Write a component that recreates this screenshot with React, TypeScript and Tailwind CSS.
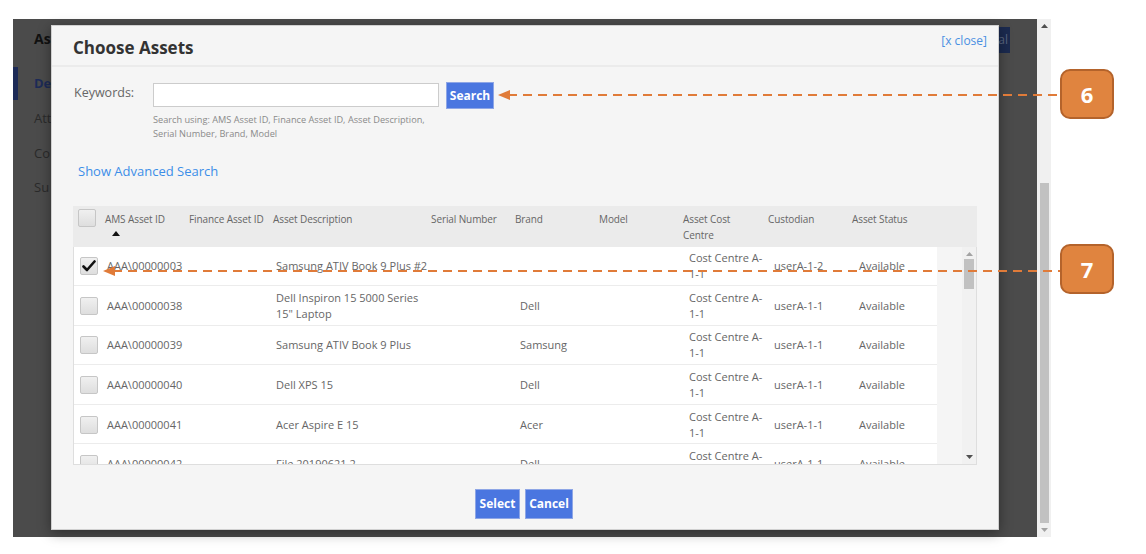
const rows = [
  { id: "AAA\\00000003", desc: ["Samsung ATIV Book 9 Plus #2"], brand: "", custodian: "userA-1-2", checked: true },
  { id: "AAA\\00000038", desc: ["Dell Inspiron 15 5000 Series", "15\" Laptop"], brand: "Dell", custodian: "userA-1-1" },
  { id: "AAA\\00000039", desc: ["Samsung ATIV Book 9 Plus"], brand: "Samsung", custodian: "userA-1-1" },
  { id: "AAA\\00000040", desc: ["Dell XPS 15"], brand: "Dell", custodian: "userA-1-1" },
  { id: "AAA\\00000041", desc: ["Acer Aspire E 15"], brand: "Acer", custodian: "userA-1-1" },
  { id: "AAA\\00000042", desc: ["File 20190621 2"], brand: "Dell", custodian: "userA-1-1" },
];

const headers = [
  ["AMS Asset ID"],
  ["Finance Asset ID"],
  ["Asset Description"],
  ["Serial Number"],
  ["Brand"],
  ["Model"],
  ["Asset Cost", "Centre"],
  ["Custodian"],
  ["Asset Status"],
];

function Checkbox({ checked }: { checked?: boolean }) {
  return (
    <div className="w-[18px] h-[18px] rounded-[2px] border border-[#c6c6c6] bg-gradient-to-b from-[#f0f0f0] to-[#dedede] flex items-center justify-center">
      {checked && (
        <svg width="14" height="12" viewBox="0 0 14 12">
          <path d="M1.5 6.5 L5 10 L12.5 1.5" fill="none" stroke="#111" strokeWidth="2.6" strokeLinecap="round" strokeLinejoin="round" />
        </svg>
      )}
    </div>
  );
}

function Callout({ n }: { n: string }) {
  return (
    <div className="w-[54px] h-[50px] rounded-[10px] bg-[#e0843f] border-2 border-[#b4632b] flex items-center justify-center text-white font-bold text-[22px]">
      {n}
    </div>
  );
}

export default function App() {
  return (
    <div className="relative w-[1146px] h-[554px] bg-white overflow-hidden font-['Open_Sans','Noto_Sans',sans-serif]">
      <div className="flex pt-[19px] pl-[13px]">
        {/* page behind the overlay */}
        <div className="relative w-[1024px] h-[518px] bg-[#4b4b4b]">
          <div className="pl-[21px] pt-[9px] text-[14px] font-bold text-[#111]">As</div>
          <div className="mt-[18px] flex h-[33px] items-center">
            <div className="w-[5px] h-full bg-[#1d2b57]"></div>
            <div className="pl-[16px] text-[13px] font-bold text-[#1d2b57]">De</div>
          </div>
          <div className="pl-[21px] mt-[9px] text-[13px] text-[#2a2a2a]">Att</div>
          <div className="pl-[21px] mt-[15px] text-[13px] text-[#2a2a2a]">Co</div>
          <div className="pl-[21px] mt-[15px] text-[13px] text-[#2a2a2a]">Su</div>
          <div className="absolute left-[970px] top-[8px] w-[27px] h-[26px] bg-[#1b2a4f] text-[12px] text-[#5a6680] flex items-center justify-end pr-[2px]">al</div>

          {/* modal */}
          <div className="absolute left-[38px] top-[6px] w-[948px] h-[505px] bg-[#f5f5f5] border border-[#d0d0d0] shadow-[0_3px_12px_rgba(0,0,0,0.4)] flex flex-col">
            <div className="h-[41px] flex justify-between border-b-2 border-[#ebebeb] pl-[21px] pr-[11px]">
              <div className="pt-[9px] text-[17px] font-bold text-[#333]">Choose Assets</div>
              <div className="pt-[6px] text-[12px] text-[#4a90e2]">[x close]</div>
            </div>

            <div className="flex pl-[22px] pt-[15px]">
              <div className="w-[79px] pt-[2px] text-[12.5px] text-[#666]">Keywords:</div>
              <div>
                <div className="flex items-start">
                  <div className="w-[286px] h-[24px] mt-[1px] bg-white border border-[#ccc]"></div>
                  <div className="ml-[7px] w-[48px] h-[27px] bg-[#4a76e0] border border-[#8ea6e6] text-white text-[12px] font-bold flex items-center justify-center">
                    Search
                  </div>
                </div>
                <div className="mt-[4px] text-[9.2px] leading-[14px] text-[#8a8a8a]">
                  <div>Search using: AMS Asset ID, Finance Asset ID, Asset Description,</div>
                  <div>Serial Number, Brand, Model</div>
                </div>
              </div>
            </div>

            <div className="pl-[26px] mt-[21px] text-[13px] text-[#3c8ee8]">Show Advanced Search</div>

            {/* table */}
            <div className="ml-[21px] mt-[24px] w-[904px]">
              <div className="grid grid-cols-[27px_84px_84px_158px_84px_84px_84px_85px_84px_1fr] h-[41px] bg-[#ebebeb] text-[10px] leading-[16px] text-[#666]">
                <div className="pl-[5px] pt-[3px]">
                  <Checkbox />
                </div>
                {headers.map((h, i) => (
                  <div key={i} className="pl-[5px] pt-[5px] tracking-[-0.1px]">
                    {h.map((l) => (
                      <div key={l}>{l}</div>
                    ))}
                    {i === 0 && (
                      <svg className="ml-[7px] mt-[4px]" width="8" height="5" viewBox="0 0 8 5">
                        <path d="M0 5 L4 0 L8 5 Z" fill="#111" />
                      </svg>
                    )}
                  </div>
                ))}
                <div></div>
              </div>
              <div className="flex h-[218px] border-l border-b border-r border-[#dedede] overflow-hidden">
                <div className="w-[863px] h-full overflow-hidden">
                  {rows.map((r) => (
                    <div
                      key={r.id}
                      className="grid grid-cols-[28px_84px_85px_160px_84px_84px_85px_85px_85px_83px] h-[39.6px] bg-white border-b border-[#ececec] text-[11px] leading-[16px] text-[#666] items-center pt-[1px]"
                    >
                      <div className="pl-[6px]">
                        <Checkbox checked={r.checked} />
                      </div>
                      <div className="pl-[5px]">{r.id}</div>
                      <div></div>
                      <div className="pl-[5px]">
                        {r.desc.map((d) => (
                          <div key={d}>{d}</div>
                        ))}
                      </div>
                      <div></div>
                      <div className="pl-[5px]">{r.brand}</div>
                      <div></div>
                      <div className="pl-[5px]">
                        <div>Cost Centre A-</div>
                        <div>1-1</div>
                      </div>
                      <div className="pl-[5px]">{r.custodian}</div>
                      <div className="pl-[5px]">Available</div>
                    </div>
                  ))}
                </div>
                <div className="flex-1"></div>
                <div className="w-[14px] h-full bg-[#f1f1f1] flex flex-col items-center">
                  <svg className="mt-[5px]" width="7" height="4" viewBox="0 0 7 4">
                    <path d="M0 4 L3.5 0 L7 4 Z" fill="#a3a3a3" />
                  </svg>
                  <div className="mt-[3px] w-[10px] h-[30px] bg-[#c1c1c1]"></div>
                  <div className="flex-1"></div>
                  <svg className="mb-[5px]" width="7" height="4" viewBox="0 0 7 4">
                    <path d="M0 0 L3.5 4 L7 0 Z" fill="#505050" />
                  </svg>
                </div>
              </div>
            </div>

            <div className="flex justify-center gap-[5px] mt-[24px] ml-[-2px]">
              <div className="w-[45px] h-[30px] bg-[#4a76e0] border border-[#8ea6e6] text-white text-[12px] font-bold flex items-center justify-center">
                Select
              </div>
              <div className="w-[48px] h-[30px] bg-[#4a76e0] border border-[#8ea6e6] text-white text-[12px] font-bold flex items-center justify-center">
                Cancel
              </div>
            </div>
          </div>
        </div>

        {/* page scrollbar */}
        <div className="w-[14px] h-[518px] bg-[#f0f0f0] flex flex-col items-center">
          <svg className="mt-[5px]" width="7" height="4" viewBox="0 0 7 4">
            <path d="M0 4 L3.5 0 L7 4 Z" fill="#505050" />
          </svg>
          <div className="mt-[155px] w-[9px] flex-1 bg-[#c1c1c1]"></div>
          <svg className="mt-[5px] mb-[5px]" width="7" height="4" viewBox="0 0 7 4">
            <path d="M0 0 L3.5 4 L7 0 Z" fill="#a3a3a3" />
          </svg>
        </div>
      </div>

      {/* annotation callouts */}
      <svg className="absolute left-0 top-0" width="1146" height="554">
        <line x1="508" y1="95" x2="1060" y2="95" stroke="#e07b39" strokeWidth="2" strokeDasharray="9 6" />
        <path d="M498 95 L510 90 L510 100 Z" fill="#e07b39" />
        <line x1="113" y1="271" x2="1060" y2="271" stroke="#e07b39" strokeWidth="2" strokeDasharray="9 6" />
        <path d="M103 271 L115 266 L115 276 Z" fill="#e07b39" />
      </svg>
      <div className="absolute left-[1060px] top-[69px]">
        <Callout n="6" />
      </div>
      <div className="absolute left-[1060px] top-[244px]">
        <Callout n="7" />
      </div>
    </div>
  );
}
